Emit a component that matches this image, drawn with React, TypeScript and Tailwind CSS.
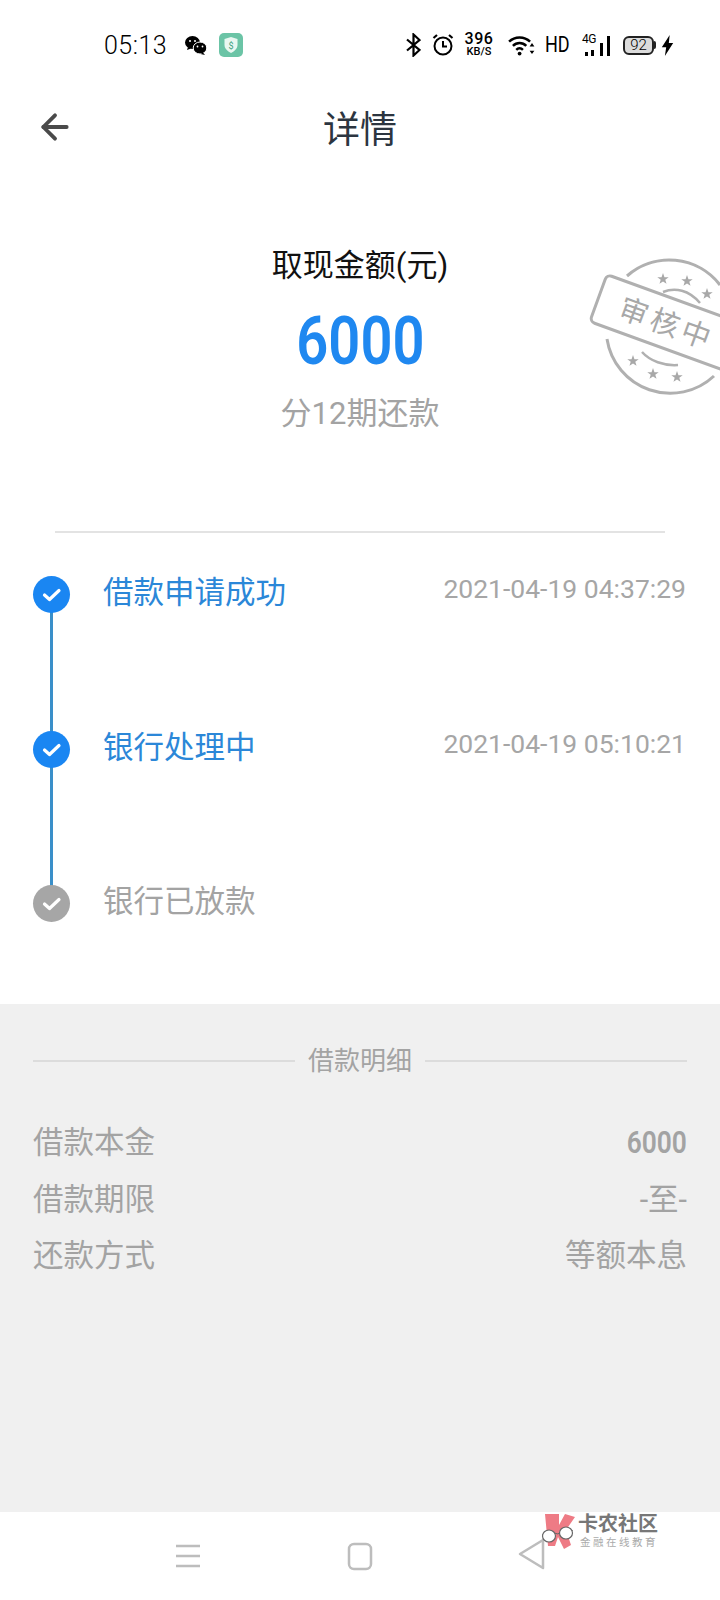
import React from 'react';
import { ArrowLeft } from 'lucide-react';

const cjk = "font-['Roboto','Noto_Sans_CJK_SC',sans-serif]";

function Check({ gray }: { gray?: boolean }) {
  return (
    <div className={`w-[37px] h-[37px] rounded-full flex items-center justify-center shrink-0 ${gray ? 'bg-[#a6a6a6]' : 'bg-[#1a86f2]'}`}>
      <svg width="20" height="16" viewBox="0 0 20 16" fill="none" stroke="#fff" strokeWidth="3.2" strokeLinecap="round" strokeLinejoin="round">
        <path d="M2.5 8l5 4.5L17 3.5" />
      </svg>
    </div>
  );
}

function StatusBar() {
  return (
    <div className="h-[90px] flex items-center pl-[104px] pr-[46px] text-black font-['Roboto',sans-serif]">
      <span className="text-[25px] font-light tracking-[0.5px] leading-none">05:13</span>
      {/* wechat */}
      <svg className="ml-[18px]" width="22" height="19" viewBox="0 0 22 19" fill="#000">
        <ellipse cx="7.5" cy="6.500" rx="7.500" ry="6.500" />
        <path d="M3 11l-1 3 4-1.500z" />
        <ellipse cx="15" cy="12" rx="6.800" ry="6" stroke="#fff" strokeWidth="1" />
        <path d="M18 16.500l2 2.500-4.500-1z" />
        <circle cx="5" cy="5" r="1" fill="#fff" />
        <circle cx="10" cy="5" r="1" fill="#fff" />
        <circle cx="12.500" cy="10.500" r="0.900" fill="#fff" />
        <circle cx="17.500" cy="10.500" r="0.900" fill="#fff" />
      </svg>
      <div className="ml-[12px] w-[24px] h-[24px] rounded-[5px] bg-[#6bc4a6] flex items-center justify-center">
        <svg width="16" height="18" viewBox="0 0 16 18">
          <path d="M8 1l6.500 2v6c0 3.500-2.800 6-6.500 8-3.700-2-6.500-4.500-6.500-8V3z" fill="#e9f7f1" />
          <text x="8" y="12.500" textAnchor="middle" fontSize="9" fill="#3f9e80" fontFamily="Roboto">$</text>
        </svg>
      </div>
      <div className="flex-1" />
      <svg width="15" height="24" viewBox="0 0 15 24" fill="none" stroke="#000" strokeWidth="2.200">
        <path d="M1 6.500L13.500 17 7.500 22.500V1.500L13.500 7 1 17.500" />
      </svg>
      <svg className="ml-[11px]" width="22" height="24" viewBox="0 0 22 24" fill="none" stroke="#000" strokeWidth="2">
        <circle cx="11" cy="13" r="8.500" />
        <path d="M11 8v5.500h4" />
        <path d="M1.500 5L5 2M20.500 5L17 2" strokeWidth="2.200" />
      </svg>
      <div className="ml-[11px] w-[28px] flex flex-col items-center leading-none font-medium">
        <span className="text-[16px] leading-[14px] tracking-[0.5px]">396</span>
        <span className="text-[11px] leading-[12px]">KB/S</span>
      </div>
      <svg className="ml-[15px]" width="27" height="21" viewBox="0 0 28 22" fill="none" stroke="#000" strokeWidth="2.600">
        <path d="M1 7c6-6 16-6 22 0" />
        <path d="M5 11.500c4-4 10-4 14 0" />
        <path d="M8.500 15.500c2-2 5-2 7 0" />
        <circle cx="12" cy="19.500" r="2" fill="#000" stroke="none" />
        <path d="M25 8.500l2.500 3.500h-5zM25 20l2.500-3.500h-5z" fill="#000" stroke="none" />
      </svg>
      <div className="ml-[10px] w-[24px]">
        <span className="block text-[22px] leading-none scale-x-[0.82] origin-left whitespace-nowrap">HD</span>
      </div>
      <div className="ml-[13px] relative w-[28px] h-[22px]">
        <span className="absolute left-0 top-[-1px] text-[12px] leading-none tracking-[-0.5px]">4G</span>
        <div className="absolute left-[3px] bottom-0 flex items-end">
          <div className="w-[3px] h-[4px] bg-black" />
          <div className="w-[3px] h-[6px] bg-black ml-[3px]" />
          <div className="w-[3px] h-[13px] bg-black ml-[5.500px]" />
          <div className="w-[3px] h-[20px] bg-black ml-[4.500px]" />
        </div>
      </div>
      <div className="ml-[13px] flex items-center">
        <div className="w-[31px] h-[19px] rounded-[6px] border-2 border-[#222] bg-[#dcdcdc] flex items-center justify-center text-[15px] font-light leading-none">92</div>
        <div className="w-[2px] h-[8px] bg-[#222] rounded-r-sm" />
      </div>
      <svg className="ml-[5px]" width="13" height="21" viewBox="0 0 13 24" fill="#000">
        <path d="M9 0L0 14h5L3.500 24 13 9H8z" />
      </svg>
    </div>
  );
}

function Star({ x, y }: { x: number; y: number }) {
  return (
    <polygon
      transform={`translate(${x} ${y}) scale(6)`}
      points="0,-1 0.24,-0.31 0.95,-0.31 0.38,0.12 0.59,0.81 0,0.4 -0.59,0.81 -0.38,0.12 -0.95,-0.31 -0.24,-0.31"
      fill="#a8a8a8"
    />
  );
}

function Stamp() {
  return (
    <svg className="absolute left-[580px] top-[255px]" width="140" height="145" viewBox="0 0 140 145" fill="none">
      <path d="M47 21A64 64 0 0 1 140 30" stroke="#b0b0b0" strokeWidth="3" />
      <path d="M27 84A64 64 0 0 0 134 121" stroke="#b0b0b0" strokeWidth="3" />
      <g transform="translate(87 68) rotate(20)">
        <rect x="-73" y="-25" width="185" height="50" rx="5" stroke="#b0b0b0" strokeWidth="3" fill="#fff" />
        <text x="0" y="11" textAnchor="middle" fontSize="29" fill="#a8a8a8" letterSpacing="4" fontFamily="'Noto Sans CJK SC', sans-serif">审核中</text>
      </g>
      <Star x={83} y={24} />
      <Star x={107} y={26} />
      <Star x={127} y={39} />
      <Star x={53} y={106} />
      <Star x={73} y={119} />
      <Star x={97} y={122} />
      <path d="M83 37c12-5 26-2 37 11" stroke="#b0b0b0" strokeWidth="2.500" />
      <path d="M62 97c8 9 22 14 36 13" stroke="#b0b0b0" strokeWidth="2.500" />
    </svg>
  );
}

function Step({ label, time, active, line, tall }: { label: string; time?: string; active?: boolean; line?: boolean; tall?: boolean }) {
  return (
    <div className={`relative flex items-start pl-[33px] pr-[34px] ${tall ? 'h-[155px]' : 'h-[154px]'}`}>
      {line && <div className="absolute left-[50px] top-[30px] w-[3px] h-[130px] bg-[#3a8fc9]" />}
      <div className="relative">
        <Check gray={!active} />
      </div>
      <span className={`ml-[33px] text-[30.500px] leading-[34px] ${active ? 'text-[#2b87d8]' : 'text-[#a3a3a3]'}`}>{label}</span>
      <div className="flex-1" />
      {time && <span className="text-[26.500px] leading-[30px] mt-[-2px] text-[#a6a6a6]">{time}</span>}
    </div>
  );
}

function Row({ left, right, num }: { left: string; right: string; num?: boolean }) {
  return (
    <div className="h-[56.500px] flex items-center justify-between text-[#a3a3a3] text-[30.500px]">
      <span>{left}</span>
      <span className={num ? 'text-[31px] font-semibold scale-x-[0.85] origin-right' : ''}>{right}</span>
    </div>
  );
}

export default function App() {
  return (
    <div className={`relative w-[720px] h-[1600px] bg-white overflow-hidden flex flex-col ${cjk}`}>
      <StatusBar />

      <div className="relative h-[76px] flex items-center justify-center">
        <ArrowLeft className="absolute left-[35px] top-[17px]" size={40} color="#4a4a4a" strokeWidth={2.300} />
        <span className="text-[37px] font-normal text-[#2c3540] leading-none mt-[4px]">详情</span>
      </div>

      <div className="flex flex-col items-center mt-[80px]">
        <span className="text-[31px] leading-[40px] text-[#111]">取现金额(元)</span>
        <span className="mt-[21px] text-[66px] leading-[70px] font-semibold text-[#1f88f0] font-['Roboto',sans-serif] scale-x-[0.85]">6000</span>
        <span className="mt-[17px] text-[31px] leading-[40px] text-[#a3a3a3]">分12期还款</span>
      </div>
      <Stamp />

      <div className="mx-[55px] h-[2px] bg-[#e3e3e3] mt-[97px]" />

      <div className="mt-[43px]">
        <Step label="借款申请成功" time="2021-04-19 04:37:29" active line tall />
        <Step label="银行处理中" time="2021-04-19 05:10:21" active line />
        <Step label="银行已放款" />
      </div>

      <div className="h-[508px] bg-[#f0f0f0] px-[33px] mt-[-35px]">
        <div className="flex items-center mt-[37px] gap-[13px] text-[26px] leading-[40px] text-[#a3a3a3]">
          <div className="flex-1 h-[2px] bg-[#dcdcdc]" />
          <span>借款明细</span>
          <div className="flex-1 h-[2px] bg-[#dcdcdc]" />
        </div>
        <div className="mt-[34px]">
          <Row left="借款本金" right="6000" num />
          <Row left="借款期限" right="-至-" />
          <Row left="还款方式" right="等额本息" />
        </div>
      </div>

      <div className="flex-1 relative flex items-center">
        <svg className="absolute left-[175px] top-[31px]" width="26" height="26" viewBox="0 0 26 26" stroke="#bdbdbd" strokeWidth="2.500">
          <path d="M1 3h24M1 13h24M1 23h24" />
        </svg>
        <svg className="absolute left-[347px] top-[29px]" width="26" height="30" viewBox="0 0 26 30" fill="none" stroke="#bdbdbd" strokeWidth="2.500">
          <rect x="2" y="3" width="22" height="25" rx="5" />
        </svg>
        <svg className="absolute left-[518px] top-[26px]" width="28" height="32" viewBox="0 0 28 32" fill="none" stroke="#bdbdbd" strokeWidth="2.500" strokeLinejoin="round">
          <path d="M25 2L2 16l23 14z" />
        </svg>
        {/* watermark */}
        <svg className="absolute left-[540px] top-[1px]" width="36" height="36" viewBox="0 0 36 36">
          <path d="M5 1h14v11L25 1l10 3-9 13 5 15-7 4-6-12-3 9H8z" fill="#ee7b85" />
          <path d="M2 22l6-4 6 2 4 1 4-3 6-2 5 2" fill="none" stroke="#666" strokeWidth="1" />
          <ellipse cx="9" cy="23" rx="6.500" ry="6" fill="#fff" stroke="#666" strokeWidth="1.200" />
          <ellipse cx="26" cy="20" rx="6.500" ry="6" fill="#fff" stroke="#666" strokeWidth="1.200" />
        </svg>
        <div className="absolute left-[578px] top-[1px] flex flex-col leading-none whitespace-nowrap">
          <span className="text-[20px] leading-[22px] font-bold text-[#777]">卡农社区</span>
          <span className="text-[10.500px] leading-[12px] text-[#aaa] tracking-[2.500px] mt-[2px] ml-[2px]">金融在线教育</span>
        </div>
      </div>
    </div>
  );
}
